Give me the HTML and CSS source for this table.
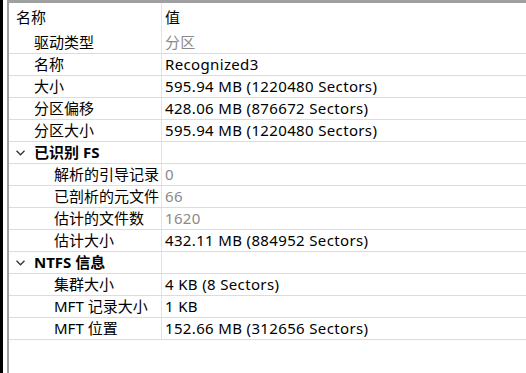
FILE: index.html
```html
<!DOCTYPE html>
<html lang="zh">
<head>
<meta charset="utf-8">
<link rel="stylesheet" href="styles.css">
</head>
<body>
<div class="frame">
  <div class="edge"></div>
  <div class="panel">
    <div class="topbar"></div>
    <div class="grid">
      <div class="row head"><div class="c1">名称</div><div class="c2">值</div></div>
      <div class="row"><div class="c1 l1">驱动类型</div><div class="c2 dim">分区</div></div>
      <div class="row"><div class="c1 l1">名称</div><div class="c2">Recognized3</div></div>
      <div class="row"><div class="c1 l1">大小</div><div class="c2">595.94 MB (1220480 Sectors)</div></div>
      <div class="row"><div class="c1 l1">分区偏移</div><div class="c2">428.06 MB (876672 Sectors)</div></div>
      <div class="row"><div class="c1 l1">分区大小</div><div class="c2">595.94 MB (1220480 Sectors)</div></div>
      <div class="row"><div class="c1 grp"><svg class="chev" width="9" height="6" viewBox="0 0 9 6"><polyline points="0.5,0.8 4.5,4.8 8.5,0.8" fill="none" stroke="#333" stroke-width="1.3"/></svg><b>已识别 FS</b></div><div class="c2"></div></div>
      <div class="row"><div class="c1 l2">解析的引导记录</div><div class="c2 dim">0</div></div>
      <div class="row"><div class="c1 l2">已剖析的元文件</div><div class="c2 dim">66</div></div>
      <div class="row"><div class="c1 l2">估计的文件数</div><div class="c2 dim">1620</div></div>
      <div class="row"><div class="c1 l2">估计大小</div><div class="c2">432.11 MB (884952 Sectors)</div></div>
      <div class="row"><div class="c1 grp"><svg class="chev" width="9" height="6" viewBox="0 0 9 6"><polyline points="0.5,0.8 4.5,4.8 8.5,0.8" fill="none" stroke="#333" stroke-width="1.3"/></svg><b>NTFS 信息</b></div><div class="c2"></div></div>
      <div class="row"><div class="c1 l2">集群大小</div><div class="c2">4 KB (8 Sectors)</div></div>
      <div class="row"><div class="c1 l2">MFT 记录大小</div><div class="c2">1 KB</div></div>
      <div class="row"><div class="c1 l2">MFT 位置</div><div class="c2">152.66 MB (312656 Sectors)</div></div>
    </div>
  </div>
</div>
</body>
</html>
```
FILE: styles.css
```css
html, body {
  margin: 0;
  padding: 0;
  background: #fff;
}
body {
  font-family: "Noto Sans", "Noto Sans CJK SC", sans-serif;
  font-size: 15px;
  color: #000;
  width: 526px;
  height: 373px;
  overflow: hidden;
}
.frame {
  display: flex;
  height: 373px;
  border-left: 3px solid #000;
  padding-left: 4px;
  box-sizing: border-box;
}
.edge {
  width: 2px;
  background: #a0a0a0;
}
.panel {
  flex: 1;
  display: flex;
  flex-direction: column;
}
.topbar {
  height: 3px;
  background: #a0a0a0;
}
.grid {
  display: flex;
  flex-direction: column;
}
.row {
  display: grid;
  grid-template-columns: 153px 1fr;
  height: 21px;
  border-bottom: 1px solid #dcdcdc;
  line-height: 21px;
}
.row.head {
  height: 29px;
  line-height: 29px;
  border-bottom: none;
}
.c1 {
  border-right: 1px solid #e3e3e3;
  white-space: nowrap;
  overflow: hidden;
}
.c2 {
  padding-left: 3px;
  white-space: nowrap;
  letter-spacing: 0.35px;
}
.head .c1 { padding-left: 7px; }
.l1 { padding-left: 25px; }
.l2 { padding-left: 45px; }
.grp {
  padding-left: 7px;
  display: flex;
  align-items: center;
}
.chev { margin-right: 9px; margin-top: 1px; }
.grp b { font-weight: 700; }
.dim { color: #8a8a8a; }
```
